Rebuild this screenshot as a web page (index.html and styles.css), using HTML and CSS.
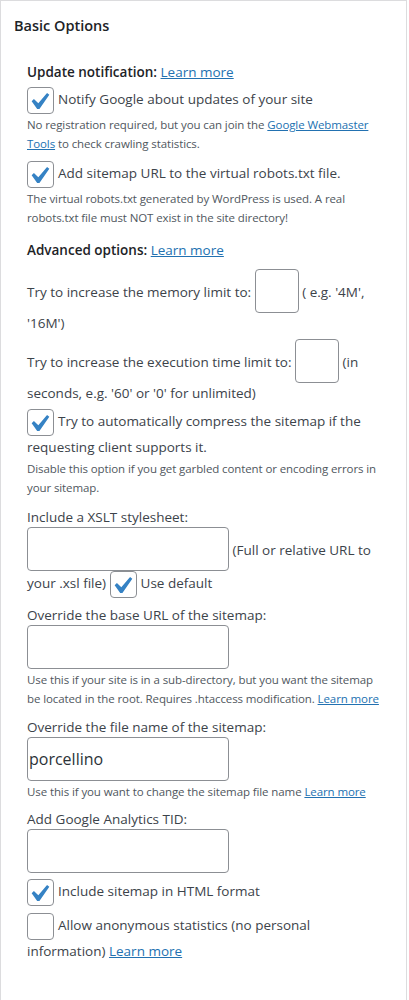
FILE: index.html
```html
<!DOCTYPE html>
<html lang="en">
<head>
<meta charset="utf-8">
<title>Basic Options</title>
<link rel="stylesheet" href="styles.css">
</head>
<body>
<div class="postbox">
  <h2 class="hndle">Basic Options</h2>
  <ul class="opts">
    <li class="head">Update notification: <a href="#">Learn more</a></li>
    <li class="cbrow sp5"><label><span class="cb"><svg viewBox="3.63 1.9 14.7 14.7" width="25" height="25"><path d="M14.83 4.89l1.34.94-5.81 8.38H9.02L5.78 9.67l1.34-1.25 2.57 2.4z"/></svg></span>Notify Google about updates of your site</label></li>
    <li class="desc">No registration required, but you can join the <a href="#">Google Webmaster Tools</a> to check crawling statistics.</li>
    <li class="cbrow sp8"><label><span class="cb"><svg viewBox="3.63 1.9 14.7 14.7" width="25" height="25"><path d="M14.83 4.89l1.34.94-5.81 8.38H9.02L5.78 9.67l1.34-1.25 2.57 2.4z"/></svg></span>Add sitemap URL to the virtual robots.txt file.</label></li>
    <li class="desc">The virtual robots.txt generated by WordPress is used. A real robots.txt file must NOT exist in the site directory!</li>
    <li class="head sp13">Advanced options: <a href="#">Learn more</a></li>
    <li class="sp9">Try to increase the memory limit to: <input class="num" type="text" aria-label="Memory limit"> ( e.g. '4M', '16M')</li>
    <li class="sp6">Try to increase the execution time limit to: <input class="num" type="text" aria-label="Execution time limit"> (in seconds, e.g. '60' or '0' for unlimited)</li>
    <li class="cbrow sp6"><span class="cb"><svg viewBox="3.63 1.9 14.7 14.7" width="25" height="25"><path d="M14.83 4.89l1.34.94-5.81 8.38H9.02L5.78 9.67l1.34-1.25 2.57 2.4z"/></svg></span>Try to automatically compress the sitemap if the requesting client supports it.</li>
    <li class="desc sp2">Disable this option if you get garbled content or encoding errors in your sitemap.</li>
    <li class="sp10">Include a XSLT stylesheet:</li>
    <li class="cbrow"><input class="txt" type="text" aria-label="XSLT stylesheet"> (Full or relative URL to your .xsl file) <span class="cb"><svg viewBox="3.63 1.9 14.7 14.7" width="25" height="25"><path d="M14.83 4.89l1.34.94-5.81 8.38H9.02L5.78 9.67l1.34-1.25 2.57 2.4z"/></svg></span>Use default</li>
    <li class="sp6">Override the base URL of the sitemap:</li>
    <li><input class="txt" type="text" aria-label="Base URL"></li>
    <li class="desc sp1">Use this if your site is in a sub-directory, but you want the sitemap be located in the root. Requires .htaccess modification. <a href="#">Learn more</a></li>
    <li class="sp9">Override the file name of the sitemap:</li>
    <li><input class="txt" type="text" value="porcellino" aria-label="File name"></li>
    <li class="desc sp1">Use this if you want to change the sitemap file name <a href="#">Learn more</a></li>
    <li class="sp8">Add Google Analytics TID:</li>
    <li><input class="txt" type="text" aria-label="Google Analytics TID"></li>
    <li class="cbrow sp6"><span class="cb"><svg viewBox="3.63 1.9 14.7 14.7" width="25" height="25"><path d="M14.83 4.89l1.34.94-5.81 8.38H9.02L5.78 9.67l1.34-1.25 2.57 2.4z"/></svg></span>Include sitemap in HTML format</li>
    <li class="cbrow sp6"><span class="cb"></span>Allow anonymous statistics (no personal information) <a href="#">Learn more</a></li>
  </ul>
</div>
</body>
</html>
```

FILE: styles.css
```css
* {
  box-sizing: border-box;
}

body {
  margin: 0;
  background: #fff;
  font-family: "Open Sans", "Noto Sans", sans-serif;
  color: #3c434a;
}

.postbox {
  width: 407px;
  min-height: 1000px;
  border: 1px solid #dcdcde;
  border-bottom: none;
  background: #fff;
}

.hndle {
  margin: 0;
  padding: 15px 13px 0;
  font-size: 14.5px;
  line-height: 20px;
  font-weight: 600;
  color: #1d2327;
}

.opts {
  list-style: none;
  margin: 26px 0 0;
  padding: 0 24px 0 26px;
  font-size: 13.5px;
  line-height: 20px;
}

.opts li {
  margin: 0;
  padding: 0;
}

a {
  color: #2271b1;
  text-decoration: underline;
}

.head {
  font-weight: 600;
  color: #1d2327;
}

.head a {
  font-weight: 400;
}

.desc {
  font-size: 11.5px;
  letter-spacing: -0.1px;
  line-height: 19px;
  color: #50575e;
}

.cb {
  display: inline-block;
  overflow: hidden;
  width: 27px;
  height: 27px;
  margin: 0 4px 1px 0;
  border: 1px solid #8c8f94;
  border-radius: 4px;
  background: #fff;
  vertical-align: -11px;
}

.cb svg {
  display: block;
  fill: #3582c4;
}

.num,
.txt {
  height: 44px;
  margin: 0;
  padding: 0 1px;
  border: 1px solid #8c8f94;
  border-radius: 4px;
  background: #fff;
  font-family: "Open Sans", "Noto Sans", sans-serif;
  font-size: 16px;
  color: #2c3338;
  vertical-align: baseline;
}

.num {
  width: 44px;
}

.txt {
  width: 202px;
}

.opts .sp1 { margin-top: 1px; }
.opts .sp2 { margin-top: 2px; }
.opts .sp5 { margin-top: 5px; }
.opts .sp6 { margin-top: 6px; }
.opts .sp8 { margin-top: 8px; }
.opts .sp9 { margin-top: 9px; }
.opts .sp10 { margin-top: 10px; }
.opts .sp13 { margin-top: 13px; }
```
